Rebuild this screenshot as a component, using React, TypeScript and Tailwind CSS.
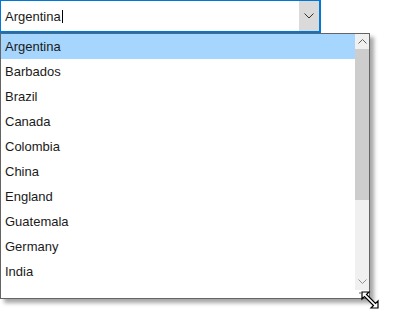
import React from "react";

const items = [
  "Argentina",
  "Barbados",
  "Brazil",
  "Canada",
  "Colombia",
  "China",
  "England",
  "Guatemala",
  "Germany",
  "India",
];

export default function App() {
  return (
    <div
      className="relative w-[394px] h-[324px] bg-white text-[13px] text-[#1a1a1a]"
      style={{ fontFamily: '"Segoe UI", "Liberation Sans", Arial, sans-serif' }}
    >
      {/* Combo box */}
      <div className="flex w-[321px] h-[33px] border border-[#0078d7] border-r-2 border-b-2 bg-white">
        <div className="flex flex-1 items-center pl-[4px] pt-[1px]">
          <span>Argentina</span>
          <span className="ml-[1px] w-px h-[13px] bg-black" />
        </div>
        <div className="flex w-[20px] items-center justify-center bg-[#dadada]">
          <svg width="10" height="6" viewBox="0 0 10 6" fill="none">
            <path d="M0.5 0.5 L5 5 L9.5 0.5" stroke="#333" strokeWidth="1" />
          </svg>
        </div>
      </div>

      {/* Drop-down list */}
      <div className="absolute left-0 top-[33px] flex w-[370px] h-[266px] border border-[#646464] bg-white shadow-[4px_4px_4px_rgba(0,0,0,0.35)]">
        <div className="flex flex-col w-[354px]">
          {items.map((it, i) => (
            <div
              key={it}
              className={
                i === 0
                  ? "flex h-[25px] items-center pl-[4px] bg-[#a6d6fd]"
                  : "flex h-[25px] items-center pl-[4px]"
              }
            >
              {it}
            </div>
          ))}
        </div>
        <div className="flex flex-col w-[14px]">
          <div className="flex flex-col h-[256px] bg-[#f0f0f0]">
            <div className="flex h-[15px] items-center justify-center">
              <svg width="9" height="5" viewBox="0 0 9 5" fill="none">
                <path d="M0.5 4.5 L4.5 0.5 L8.5 4.5" stroke="#606060" strokeWidth="1" />
              </svg>
            </div>
            <div className="h-[151px] bg-[#cdcdcd]" />
            <div className="flex-1" />
            <div className="flex h-[17px] items-center justify-center">
              <svg width="9" height="5" viewBox="0 0 9 5" fill="none">
                <path d="M0.5 0.5 L4.5 4.5 L8.5 0.5" stroke="#909090" strokeWidth="1" />
              </svg>
            </div>
          </div>
        </div>
      </div>

      {/* grip dots */}
      <div className="absolute left-[359px] top-[292px] w-[2px] h-[2px] bg-[#b0b0b0]" />

      {/* resize cursor */}
      <svg
        className="absolute left-[361px] top-[291px]"
        width="18"
        height="18"
        viewBox="0 0 18 18"
      >
        <polygon
          points="1,1 8,1 5.5,3.5 14.5,12.5 17,10 17,17 10,17 12.5,14.5 3.5,5.5 1,8"
          fill="#fff"
          stroke="#000"
          strokeWidth="1.2"
          strokeLinejoin="miter"
        />
      </svg>
    </div>
  );
}
